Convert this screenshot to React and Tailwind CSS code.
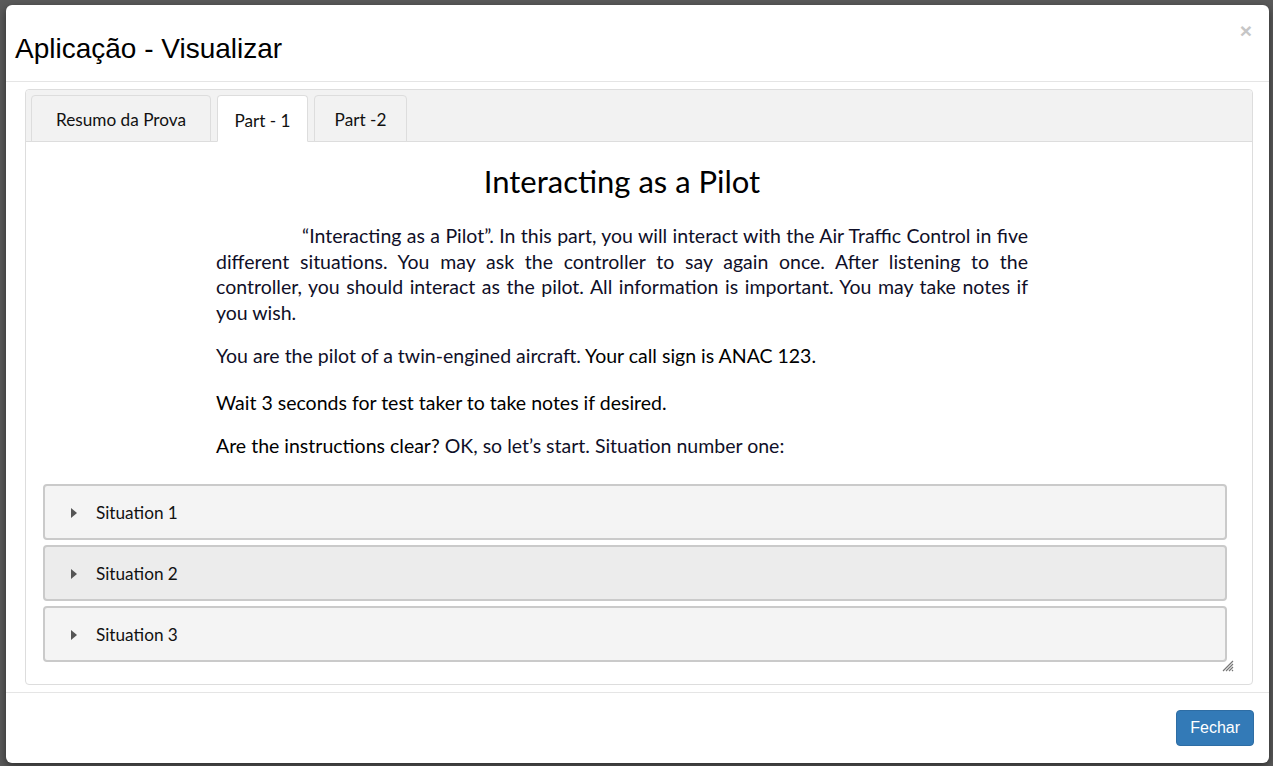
import React from 'react';

const CAL = "font-['Lato','Open_Sans',sans-serif]";
const ARIAL = "font-['Liberation_Sans',Arial,sans-serif]";

const TABS = [
  { label: 'Resumo da Prova', w: 'w-[180px]' },
  { label: 'Part - 1', w: 'w-[91px]', active: true },
  { label: 'Part -2', w: 'w-[93px]' },
];

const SITUATIONS = ['Situation 1', 'Situation 2', 'Situation 3'];

const Line = ({ children, last, indent }) => (
  <span
    className={`block ${last ? 'text-left' : 'text-justify [text-align-last:justify]'} ${indent ? 'indent-[86px]' : ''}`}
  >
    {children}
  </span>
);

const Situation = ({ label, hover }) => (
  <div
    className={`h-[56px] flex items-center rounded-[4px] border-2 border-[#cacaca] pt-[3px] ${hover ? 'bg-[#ececec]' : 'bg-[#f4f4f4]'}`}
  >
    <svg className="ml-[26px] w-[7px] h-[10px]" viewBox="0 0 7 10">
      <path d="M0 0 L6 5 L0 10 Z" fill="#555" />
    </svg>
    <span className={`ml-[18px] text-[17.2px] text-[#111] ${CAL}`}>{label}</span>
  </div>
);

export default function App() {
  return (
    <div className="h-[766px] w-full bg-[#5a5a5a] pt-[5px] pb-[3px] pl-[6px] pr-[4px]">
      <div className="h-full bg-white rounded-[6px] flex flex-col shadow-[0_3px_9px_rgba(0,0,0,0.5)]">
        {/* Header */}
        <div className="relative h-[77px] shrink-0 border-b border-[#e5e5e5] pl-[9px] pt-[28px]">
          <h4 className={`${ARIAL} text-[28px] leading-[32px] text-black`}>Aplicação - Visualizar</h4>
          <span className={`${ARIAL} absolute right-[17px] top-[15px] text-[21px] font-bold leading-none text-[#c6c6c6]`}>×</span>
        </div>

        {/* Body */}
        <div className="flex-1 pt-[7px] pl-[19px] pr-[16px] pb-[7px] flex flex-col">
          <div className="relative flex-1 flex flex-col rounded-[4px] border border-[#dddddd]">
            {/* Tab strip */}
            <div className="h-[52px] shrink-0 bg-[#f2f2f2] border-b border-[#dddddd] rounded-t-[4px] flex items-end gap-[6px] pl-[5px]">
              {TABS.map(t => (
                <div
                  key={t.label}
                  className={`${t.w} h-[47px] -mb-px flex items-center justify-center rounded-t-[4px] border border-[#dddddd] ${CAL} text-[17.2px] text-[#111] ${
                    t.active ? 'bg-white border-b-white pt-[5px]' : 'bg-[#f2f2f2] border-b-[#dddddd] pt-[3px]'
                  }`}
                >
                  {t.label}
                </div>
              ))}
            </div>

            {/* Content */}
            <div className="flex-1 flex flex-col">
              <div className={`ml-[190px] w-[812px] ${CAL} text-[#111]`}>
                <h2 className="text-center text-[31px] leading-[36px] pt-[21px] text-black">Interacting as a Pilot</h2>
                <p className="mt-[24px] text-[19.5px] leading-[25.5px] text-[#0f0f28]">
                  <Line indent>“Interacting as a Pilot”. In this part, you will interact with the Air Traffic Control in five</Line>
                  <Line>different situations. You may ask the controller to say again once. After listening to the</Line>
                  <Line>controller, you should interact as the pilot. All information is important. You may take notes if</Line>
                  <Line last>you wish.</Line>
                </p>
                <p className="mt-[18px] text-[19.5px] leading-[25.5px]">
                  <span className="text-[#0f0f28]">You are the pilot of a twin-engined aircraft.</span>{' '}
                  <span className="text-black">Your call sign is ANAC 123.</span>
                </p>
                <p className="mt-[21px] text-[19.5px] leading-[25.5px] text-black">Wait 3 seconds for test taker to take notes if desired.</p>
                <p className="mt-[18px] text-[19.5px] leading-[25.5px]">
                  <span className="text-black">Are the instructions clear?</span>{' '}
                  <span className="text-[#0f0f28]">OK, so let’s start. Situation number one:</span>
                </p>
              </div>

              <div className="mt-[25px] ml-[17px] mr-[25px] flex flex-col gap-[5px]">
                {SITUATIONS.map((s, i) => (
                  <Situation key={s} label={s} hover={i === 1} />
                ))}
              </div>
            </div>

            {/* Resize grip */}
            <svg className="absolute right-[18px] bottom-[12px] w-[12px] h-[12px]" viewBox="0 0 12 12">
              <path d="M11 1 L1 11 M11 4 L4 11 M11 7 L7 11 M11 10 L10 11" stroke="#777" strokeWidth="1.2" />
            </svg>
          </div>
        </div>

        {/* Footer */}
        <div className="h-[71px] shrink-0 border-t border-[#e5e5e5] flex items-start justify-end pt-[17px] pr-[15px]">
          <button className={`${ARIAL} h-[36px] px-[13px] rounded-[4px] bg-[#337ab7] border border-[#2e6da4] text-white text-[16px]`}>
            Fechar
          </button>
        </div>
      </div>
    </div>
  );
}
